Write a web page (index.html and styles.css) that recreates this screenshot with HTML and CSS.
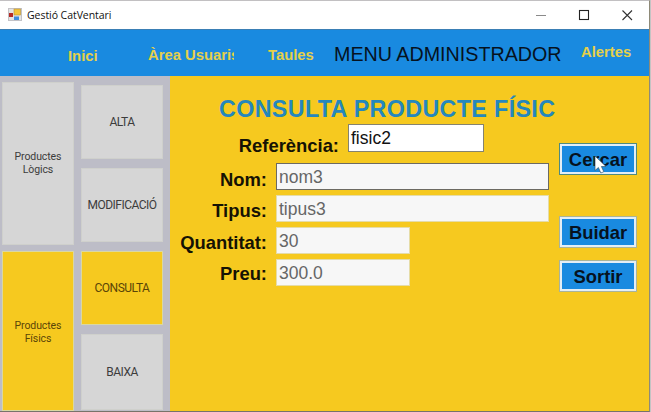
FILE: index.html
```html
<!DOCTYPE html>
<html lang="ca">
<head>
<meta charset="utf-8">
<title>Gestió CatVentari</title>
<link rel="stylesheet" href="styles.css">
</head>
<body>
<div class="window">
  <header class="titlebar">
    <svg class="app-icon" width="14" height="14" viewBox="0 0 14 14">
      <rect x="0.5" y="0.5" width="13" height="12" fill="#e4e3e4" stroke="#c3c2c6"/>
      <rect x="1" y="5" width="4" height="4" fill="#b52a26"/>
      <rect x="6" y="1" width="6.5" height="6" fill="#f4c53b" stroke="#b89135" stroke-width=".6"/>
      <rect x="6" y="8.5" width="5" height="3.5" fill="#3d8de0"/>
    </svg>
    <span class="title">Gestió CatVentari</span>
    <svg class="controls" width="104" height="14" viewBox="0 0 104 14" fill="none">
      <path d="M0 7.5h10" stroke="#8a8a8a"/>
      <rect x="43.5" y="2.5" width="9" height="9" stroke="#222" stroke-width="1.1"/>
      <path d="M86.500 2.500l9.500 9.500M96 2.500l-9.500 9.500" stroke="#333" stroke-width="1.1"/>
    </svg>
  </header>
  <nav class="menu">
    <a class="link inici">Inici</a>
    <a class="link area">Àrea Usuaris</a>
    <a class="link taules">Taules</a>
    <span class="menu-title">MENU ADMINISTRADOR</span>
    <a class="link alertes">Alertes</a>
  </nav>
  <div class="content">
    <aside class="sidebar">
      <div class="groups">
        <div class="tile logics">Productes<br>Lògics</div>
        <div class="tile fisics active">Productes<br>Físics</div>
      </div>
      <div class="actions">
        <div class="tile"><span class="alta">ALTA</span></div>
        <div class="tile"><span class="modificacio">MODIFICACIÓ</span></div>
        <div class="tile active"><span class="consulta">CONSULTA</span></div>
        <div class="tile baixa"><span>BAIXA</span></div>
      </div>
    </aside>
    <main class="panel">
      <h1>CONSULTA PRODUCTE FÍSIC</h1>
      <div class="columns">
        <div class="form">
          <div class="row reference"><span class="label">Referència:</span><div class="field">fisic2</div></div>
          <div class="row nom"><span class="label">Nom:</span><div class="field focus">nom3</div></div>
          <div class="row"><span class="label">Tipus:</span><div class="field">tipus3</div></div>
          <div class="row"><span class="label">Quantitat:</span><div class="field short">30</div></div>
          <div class="row preu"><span class="label">Preu:</span><div class="field short">300.0</div></div>
        </div>
        <div class="buttons">
          <div class="button cercar">Cercar
            <svg class="cursor" width="13" height="20" viewBox="0 0 13 20"><path d="M1 1v14.500l3.400-3 2.400 5.500 3-1.300-2.400-5.200h4.600z" fill="#fff" stroke="#35546b" stroke-width=".7"/></svg>
          </div>
          <div class="button buidar">Buidar</div>
          <div class="button sortir">Sortir</div>
        </div>
      </div>
    </main>
  </div>
</div>
</body>
</html>
```
FILE: styles.css
```css
* { box-sizing: border-box; }
body {
  margin: 0;
  background: #c4c4c4;
  font-family: "Liberation Sans", sans-serif;
  overflow: hidden;
}
.window {
  width: 650px;
  height: 412px;
  display: flex;
  flex-direction: column;
  border-top: 1px solid #c2c0c2;
  border-right: 1px solid #8e8a78;
  border-bottom: 1px solid #77736a;
  background: #fff;
}
.titlebar {
  flex: none;
  height: 28px;
  display: flex;
  align-items: center;
  padding: 0 13px 0 8px;
}
.app-icon { margin-right: 5px; }
.title {
  font: 10.500px/20px "Open Sans", sans-serif;
  letter-spacing: -0.050px;
  color: #111;
  white-space: nowrap;
}
.controls { margin-left: auto; margin-right: -4px; }
.menu {
  flex: none;
  height: 47px;
  display: flex;
  background: #198ae0;
  border-top: 1px solid #3a7fb5;
  padding: 15px 0 0 68px;
}
.link {
  flex: none;
  height: 20px;
  font-size: 14.800px;
  font-weight: bold;
  line-height: 20px;
  color: #e6d04a;
  white-space: nowrap;
}
.inici { width: 80px; padding-top: 1px; }
.area { width: 86px; overflow: hidden; }
.taules { margin-left: 34px; width: 66px; }
.menu-title {
  width: 247px;
  margin-top: -3px;
  font-size: 19.700px;
  line-height: 24px;
  color: #06121e;
  white-space: nowrap;
}
.alertes { margin-top: -3px; }
.content { flex: 1; min-height: 0; display: flex; }
.sidebar {
  flex: none;
  width: 170px;
  display: flex;
  gap: 7px;
  padding: 6px 7px 0 2px;
  background: #bdbdc7;
}
.groups { width: 72px; display: flex; flex-direction: column; gap: 6px; }
.actions { width: 82px; padding-top: 3px; display: flex; flex-direction: column; gap: 9px; }
.tile {
  flex: none;
  display: flex;
  align-items: center;
  justify-content: center;
  border: 1px solid #cfd0cc;
  background: #d6d6d6;
  color: #3c3c3c;
  font: 10.500px/12.500px Roboto, sans-serif;
  text-align: center;
}
.tile.active { background: #f6c91f; border-color: #dad8a0; color: #5a4507; }
.groups .tile { letter-spacing: -0.100px; }
.logics { height: 163px; }
.fisics { height: 160px; padding-top: 3px; }
.actions .tile { height: 74px; font-size: 12px; line-height: 14px; letter-spacing: -0.500px; }
.actions .baixa { height: 76px; }
.panel { flex: 1; min-width: 0; background: #f6c91f; }
h1 {
  margin: 19px 0 0 49px;
  font-size: 23.300px;
  line-height: 28px;
  letter-spacing: 0.350px;
  font-weight: bold;
  color: #2587bd;
  white-space: nowrap;
}
.columns { display: flex; }
.form { width: 389px; flex: none; padding-top: 1px; }
.row { display: flex; height: 27px; margin-bottom: 5px; }
.label {
  width: 97px;
  flex: none;
  padding-top: 6px;
  margin-right: 9px;
  text-align: right;
  font-size: 18.400px;
  font-weight: bold;
  line-height: 20px;
  color: #151204;
}
.field {
  width: 273px;
  padding-left: 2px;
  border: 1px solid #e5dca8;
  background: #f7f7f7;
  color: #666;
  font-size: 17.500px;
  line-height: 26px;
}
.field.short { width: 134px; }
.field.focus { border-color: #6c6a62; }
.reference { height: 28px; margin-bottom: 11px; }
.reference .label { width: 169px; padding-top: 12px; }
.reference .field { width: 136px; background: #fff; color: #111; border-color: #85836f; line-height: 27px; }
.nom .label { padding-top: 7px; }
.preu .label { padding-top: 5px; }
.buttons { width: 78px; padding-top: 20px; }
.button {
  position: relative;
  height: 32px;
  border: 1px solid #a9b49a;
  box-shadow: inset 0 0 0 2px #e4eef5;
  background: #198ae0;
  color: #06121e;
  font-size: 18.400px;
  font-weight: bold;
  line-height: 32px;
  text-align: center;
}
.cercar { border-color: #4d8a80; }
.cursor { position: absolute; left: 34px; top: 11px; }
.buidar { margin-top: 41px; }
.sortir { margin-top: 12px; }
```
